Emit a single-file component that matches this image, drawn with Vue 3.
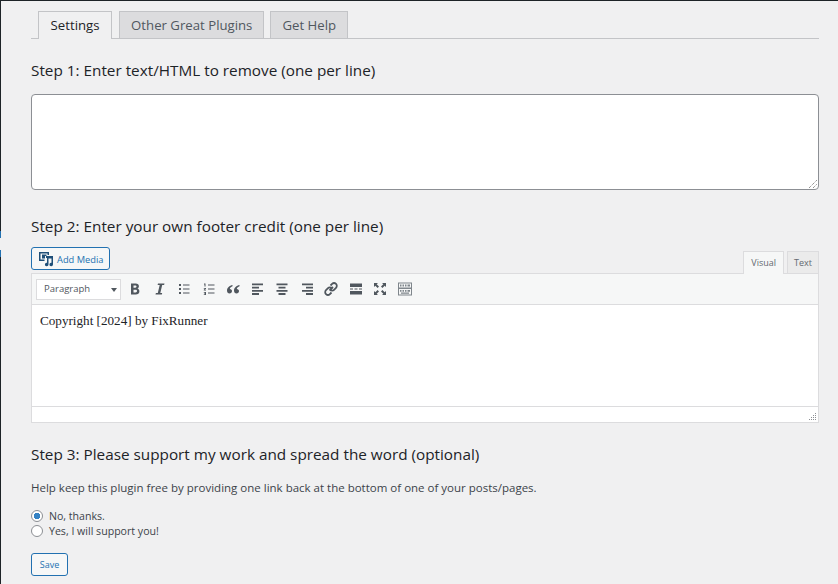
<script setup>
const tools = ['b','i','ul','ol','quote','left','center','right','link','more','full','kitchen']
</script>

<template>
  <div class="page">
    <span class="edge-mark one"></span>
    <span class="edge-mark gap"></span>
    <span class="edge-mark two"></span>
    <nav class="tabs">
      <a class="tab active">Settings</a>
      <a class="tab">Other Great Plugins</a>
      <a class="tab">Get Help</a>
    </nav>

    <h2 class="step first">Step 1: Enter text/HTML to remove (one per line)</h2>
    <div class="textarea">
      <svg class="grip" width="10" height="10" viewBox="0 0 10 10">
        <path d="M1 9 9 1M5 9 9 5" stroke="#666" stroke-width="1" stroke-dasharray="1 1" fill="none" />
      </svg>
    </div>

    <h2 class="step second">Step 2: Enter your own footer credit (one per line)</h2>

    <div class="editor-head">
      <button class="btn media">
        <svg width="16" height="16" viewBox="0 0 16 16">
          <path fill="#1f4f78" fill-rule="evenodd" d="M1 1h10v3h-1.500V2.500h-7v6h4V10H1zM4 3.500h4.500V5H7v2.500H4z" />
          <path fill="#1f4f78" fill-rule="evenodd" d="M8 5h7v8.500a1.800 1.800 0 1 1-1.500-1.800V7.500h-3v6a1.800 1.800 0 1 1-1.500-1.800V7H8z" />
        </svg>
        <span class="media-label">Add Media</span>
      </button>
      <div class="modes">
        <span class="mode on">Visual</span>
        <span class="mode">Text</span>
      </div>
    </div>

    <div class="editor">
      <div class="toolbar">
        <div class="select">Paragraph<i class="caret"></i></div>
        <div class="icons">
          <svg v-for="t in tools" :key="t" class="tool" width="20" height="20" viewBox="0 0 20 20">
            <path v-if="t === 'b'" fill="#50575e" fill-rule="evenodd" d="M6 4.500h4.700c2 0 3.200 1 3.200 2.700 0 1.100-.6 1.900-1.600 2.300 1.200.3 2.100 1.300 2.100 2.700 0 2.100-1.500 3.300-3.700 3.300H6zm2.500 2v2.300h1.800c.8 0 1.200-.5 1.200-1.200s-.4-1.100-1.200-1.100zm0 4.200v2.800h2.100c.9 0 1.400-.5 1.400-1.400s-.5-1.400-1.400-1.400z" />
            <path v-else-if="t === 'i'" fill="#50575e" d="M8 4.500h6.500l-.4 1.500h-1.900l-1.900 8h1.900l-.4 1.500H5.500l.4-1.500h1.900l1.900-8H7.600z" />
            <path v-else-if="t === 'ul'" fill="#50575e" d="M5 5h2v2H5zM9 5.500h6.500v1H9zM5 9h2v2H5zM9 9.500h6.500v1H9zM5 13h2v2H5zM9 13.500h6.500v1H9z" />
            <path v-else-if="t === 'ol'" fill="#50575e" d="M5 4.500h1.500v3h-1V5.500H5zM9 5.500h6.500v1H9zM4.800 9h2.200v.8l-1.200 1H7v.7H4.800v-.8l1.200-1H4.800zM9 9.500h6.500v1H9zM4.800 13H7v3H4.800v-.7H6v-.5H5v-.6h1v-.5H4.800zM9 13.500h6.500v1H9z" />
            <path v-else-if="t === 'quote'" fill="#50575e" d="M9.500 6C6.500 6.700 4 8.500 4 11.500 4 13.200 5 14.500 6.500 14.500S9 13.400 9 12.100c0-1.200-.9-2.100-2.200-2.200.3-1.200 1.400-2.200 2.700-2.700zM16.500 6c-3 .7-5.500 2.500-5.500 5.500 0 1.700 1 3 2.500 3s2.500-1.100 2.500-2.400c0-1.200-.9-2.100-2.200-2.200.3-1.200 1.400-2.200 2.700-2.700z" />
            <path v-else-if="t === 'left'" fill="#50575e" d="M4 4.500h11v1.800H4zM4 7.700h7v1.800H4zM4 10.900h11v1.800H4zM4 14.100h7v1.800H4z" />
            <path v-else-if="t === 'center'" fill="#50575e" d="M4.500 4.500h11v1.800h-11zM6.500 7.700h7v1.800h-7zM4.500 10.900h11v1.800h-11zM6.500 14.100h7v1.800h-7z" />
            <path v-else-if="t === 'right'" fill="#50575e" d="M5 4.500h11v1.800H5zM9 7.700h7v1.800H9zM5 10.900h11v1.800H5zM9 14.100h7v1.800H9z" />
            <path v-else-if="t === 'link'" fill="none" stroke="#50575e" stroke-width="1.800" d="M8.500 11.500 12 8M9.500 6.500l1.600-1.600a2.600 2.600 0 0 1 3.900 3.900l-2 2a2.600 2.600 0 0 1-3.700 0M10.500 13.500l-1.600 1.600a2.600 2.600 0 0 1-3.900-3.900l2-2a2.600 2.600 0 0 1 3.700 0" />
            <path v-else-if="t === 'more'" fill="#50575e" d="M4 4.500h12v3.500H4zM4 9.500h3v1H4zM8.500 9.500h3v1h-3zM13 9.500h3v1h-3zM4 12h12v3.500H4z" />
            <path v-else-if="t === 'full'" fill="#50575e" d="M4 4h4L6.700 5.300 9 7.600 7.600 9 5.300 6.700 4 8zM16 4v4l-1.300-1.300L12.400 9 11 7.600l2.300-2.300L12 4zM4 16v-4l1.300 1.300L7.600 11 9 12.400l-2.300 2.300L8 16zM16 16h-4l1.300-1.300L11 12.400l1.400-1.400 2.300 2.300L16 12z" />
            <path v-else fill="#7f868c" fill-rule="evenodd" d="M3 3.500h14v13H3zm1 1v4h12v-4zm0 5.500v5.500h12V10zm1-4.500h1.500v2H5zm2.500 0H9v2H7.500zm2.500 0h1.500v2H10zm2.500 0H15v2h-2.500zM5 11h1.500v1.800H5zm2.500 0H9v1.800H7.500zm2.500 0h1.500v1.800H10zm2.500 0H15v1.800h-2.500zM6 13.500h8v1.200H6z" />
          </svg>
        </div>
      </div>
      <div class="content">Copyright [2024] by FixRunner</div>
      <div class="status">
        <svg width="9" height="9" viewBox="0 0 9 9" class="status-grip">
          <path fill="#8c8f94" d="M7 1h1v1H7zM5 3h1v1H5zM7 3h1v1H7zM3 5h1v1H3zM5 5h1v1H5zM7 5h1v1H7zM1 7h1v1H1zM3 7h1v1H3zM5 7h1v1H5zM7 7h1v1H7z" />
        </svg>
      </div>
    </div>

    <h2 class="step third">Step 3: Please support my work and spread the word (optional)</h2>
    <p class="help">Help keep this plugin free by providing one link back at the bottom of one of your posts/pages.</p>

    <label class="radio"><i class="dot checked"></i>No, thanks.</label>
    <label class="radio"><i class="dot"></i>Yes, I will support you!</label>

    <button class="btn save">Save</button>
  </div>
</template>

<style>
html, body { margin: 0; background: #f0f0f1; }
</style>

<style scoped>
.page {
  position: relative;
  box-sizing: border-box;
  width: 838px;
  height: 584px;
  padding: 0 19px 0 30px;
  background: #f0f0f1;
  border-top: 1px solid #1d2327;
  border-left: 1px solid #1d2327;
  font-family: "Open Sans", sans-serif;
  color: #3c434a;
}
.edge-mark {
  position: absolute;
  left: -1px;
  width: 1px;
  background: #2271b1;
}
.edge-mark.one { top: 230px; height: 7px; }
.edge-mark.gap { top: 237px; height: 12px; background: #f0f0f1; }
.edge-mark.two { top: 249px; height: 7px; }
.tabs {
  display: flex;
  height: 27px;
  padding: 10px 0 0 7px;
  border-bottom: 1px solid #c3c4c7;
}
.tab {
  box-sizing: border-box;
  height: 27px;
  margin-right: 6px;
  padding: 0 11px;
  border: 1px solid #c3c4c7;
  border-bottom: 0;
  background: #dcdcde;
  color: #50575e;
  font-size: 13.200px;
  font-weight: 500;
  line-height: 27px;
}
.tab.active {
  height: 28px;
  margin-right: 7px;
  padding: 0 11.600px;
  background: #f0f0f1;
  color: #1d2327;
}
.step {
  margin: 0;
  color: #1d2327;
  font-size: 15.300px;
  font-weight: 500;
  line-height: 20px;
}
.first { margin-top: 21px; }
.textarea {
  position: relative;
  box-sizing: border-box;
  height: 96px;
  margin-top: 14px;
  background: #fff;
  border: 1px solid #8c8f94;
  border-radius: 4px;
}
.grip { position: absolute; right: 0; bottom: 0; }
.second { margin-top: 26px; }
.editor-head {
  display: flex;
  align-items: flex-end;
  justify-content: space-between;
  margin-top: 11px;
}
.btn {
  box-sizing: border-box;
  background: #f6f7f7;
  border: 1px solid #2271b1;
  border-radius: 3px;
  color: #2271b1;
  font-family: inherit;
  font-size: 9.300px;
  padding: 0;
}
.media {
  display: flex;
  align-items: center;
  gap: 3px;
  height: 23px;
  width: 79px;
  padding-left: 6px;
  margin-bottom: 3px;
}
.media-label { padding-top: 1px; }
.modes { display: flex; gap: 3px; }
.mode {
  box-sizing: border-box;
  height: 22px;
  padding: 0 6px;
  border: 1px solid #dcdcde;
  border-bottom: 0;
  background: #ebebeb;
  color: #646970;
  font-size: 9px;
  line-height: 21px;
}
.mode.on { background: #f6f7f7; height: 23px; margin-bottom: -1px; padding: 0 7px; }
.editor {
  border: 1px solid #dcdcde;
  background: #fff;
}
.toolbar {
  display: flex;
  align-items: center;
  box-sizing: border-box;
  height: 31px;
  padding-left: 4px;
  background: #f6f7f7;
  border-bottom: 1px solid #dcdcde;
}
.select {
  position: relative;
  box-sizing: border-box;
  width: 85px;
  height: 21px;
  padding-left: 7px;
  background: #fff;
  border: 1px solid #dcdcde;
  color: #50575e;
  font-size: 9.500px;
  line-height: 18px;
}
.caret {
  position: absolute;
  right: 3px;
  top: 8px;
  border: 3px solid transparent;
  border-top: 4px solid #50575e;
  border-bottom: 0;
}
.icons { display: flex; gap: 4.500px; margin-left: 4px; }
.tool { display: block; width: 20px; height: 20px; }
.content {
  box-sizing: border-box;
  height: 101px;
  padding: 9px 8px;
  background: #fff;
  color: #1d2327;
  font-family: "Liberation Serif", serif;
  font-size: 13.150px;
  line-height: 14px;
}
.status {
  position: relative;
  height: 15px;
  background: #fff;
  border-top: 1px solid #dcdcde;
}
.status-grip { position: absolute; right: 1px; bottom: 1px; }
.third { margin-top: 21px; }
.help {
  margin: 16px 0 0;
  font-size: 11.500px;
  line-height: 16px;
}
.radio {
  display: flex;
  align-items: center;
  gap: 6px;
  height: 15px;
  font-size: 10.600px;
}
.help + .radio { margin-top: 12px; }
.dot {
  box-sizing: border-box;
  display: block;
  width: 12px;
  height: 12px;
  background: #fff;
  border: 1px solid #8c8f94;
  border-radius: 50%;
}
.dot.checked {
  background: radial-gradient(circle, #3582c4 3px, #fff 3.500px);
}
.save {
  display: block;
  width: 37px;
  height: 23px;
  margin-top: 15px;
  font-size: 9px;
}
</style>
